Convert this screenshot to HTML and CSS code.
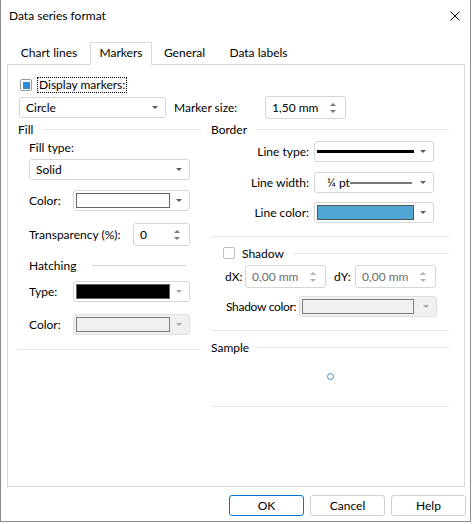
FILE: index.html
```html
<!DOCTYPE html>
<html lang="en">
<head>
    <meta charset="UTF-8">
    <title>Data series format</title>
    <link rel="stylesheet" href="styles.css">
</head>
<body>
    <div class="dialog">
        <!-- Title bar -->
        <div class="titlebar">
            <span class="title">Data series format</span>
            <svg class="close" width="10" height="10" viewBox="0 0 10 10">
                <path d="M0.5 0.5L9.5 9.5M9.5 0.5L0.5 9.5" stroke="#000" stroke-width="1" fill="none"/>
            </svg>
        </div>

        <!-- Tabs -->
        <div class="tabs">
            <div class="tab tab-lines">Chart lines</div>
            <div class="tab tab-markers active">Markers</div>
            <div class="tab tab-general">General</div>
            <div class="tab tab-labels">Data labels</div>
        </div>

        <div class="panel">
            <div class="display-row">
                <span class="checkbox checked"><span class="tick"></span></span>
                <span class="focus-label">Display markers:</span>
            </div>

            <div class="marker-row">
                <div class="combo combo-shape">
                    <span>Circle</span>
                    <span class="arrow"></span>
                </div>
                <span class="marker-size-label">Marker size:</span>
                <div class="spin spin-size">
                    <span>1,50 mm</span>
                    <span class="spin-btns"><i class="up"></i><i class="down"></i></span>
                </div>
            </div>

            <div class="columns">
                <!-- Fill -->
                <div class="col-left">
                    <div class="group-head">
                        <span>Fill</span>
                        <span class="rule"></span>
                    </div>
                    <div class="field-label">Fill type:</div>
                    <div class="combo combo-fill">
                        <span>Solid</span>
                        <span class="arrow"></span>
                    </div>
                    <div class="row row-color">
                        <span class="lbl lbl-short">Color:</span>
                        <div class="combo combo-swatch">
                            <span class="swatch swatch-white"></span>
                            <span class="arrow"></span>
                        </div>
                    </div>
                    <div class="row row-transp">
                        <span class="lbl lbl-transp">Transparency (%):</span>
                        <div class="spin spin-transp">
                            <span>0</span>
                            <span class="spin-btns"><i class="up"></i><i class="down"></i></span>
                        </div>
                    </div>
                    <div class="hatch-head">
                        <span class="hatch-title">Hatching</span>
                        <span class="rule"></span>
                    </div>
                    <div class="row row-type">
                        <span class="lbl lbl-short">Type:</span>
                        <div class="combo combo-swatch">
                            <span class="swatch swatch-black"></span>
                            <span class="arrow arrow-light"></span>
                        </div>
                    </div>
                    <div class="row row-hcolor">
                        <span class="lbl lbl-short">Color:</span>
                        <div class="combo combo-swatch disabled">
                            <span class="swatch swatch-off"></span>
                            <span class="arrow arrow-light"></span>
                        </div>
                    </div>
                    <div class="sep sep-left"></div>
                </div>

                <!-- Border / Shadow / Sample -->
                <div class="col-right">
                    <div class="group-head">
                        <span>Border</span>
                        <span class="rule"></span>
                    </div>
                    <div class="row row-linetype">
                        <span class="lbl lbl-right">Line type:</span>
                        <div class="combo combo-line">
                            <span class="line-solid"></span>
                            <span class="arrow"></span>
                        </div>
                    </div>
                    <div class="row row-linewidth">
                        <span class="lbl lbl-right">Line width:</span>
                        <div class="combo combo-line combo-width">
                            <span class="width-text">¼ pt</span>
                            <span class="line-thin"></span>
                            <span class="arrow"></span>
                        </div>
                    </div>
                    <div class="row row-linecolor">
                        <span class="lbl lbl-right">Line color:</span>
                        <div class="combo combo-line">
                            <span class="swatch swatch-blue"></span>
                            <span class="arrow"></span>
                        </div>
                    </div>
                    <div class="sep sep-right sep-border"></div>

                    <div class="shadow-head">
                        <span class="checkbox"></span>
                        <span class="shadow-title">Shadow</span>
                        <span class="rule"></span>
                    </div>
                    <div class="row row-offsets">
                        <span class="lbl lbl-dx">dX:</span>
                        <div class="spin spin-off">
                            <span>0,00 mm</span>
                            <span class="spin-btns"><i class="up"></i><i class="down"></i></span>
                        </div>
                        <span class="lbl lbl-dy">dY:</span>
                        <div class="spin spin-off">
                            <span>0,00 mm</span>
                            <span class="spin-btns"><i class="up"></i><i class="down"></i></span>
                        </div>
                    </div>
                    <div class="row row-shcolor">
                        <span class="lbl lbl-shcolor">Shadow color:</span>
                        <div class="combo combo-shadow disabled">
                            <span class="swatch swatch-off swatch-wide"></span>
                            <span class="arrow arrow-light"></span>
                        </div>
                    </div>
                    <div class="sep sep-right sep-shadow"></div>

                    <div class="group-head sample-head">
                        <span>Sample</span>
                        <span class="rule"></span>
                    </div>
                    <div class="sample-box">
                        <span class="sample-dot"></span>
                    </div>
                    <div class="sep sep-right"></div>
                </div>
            </div>
        </div>

        <!-- Buttons -->
        <div class="buttons">
            <button class="btn primary">OK</button>
            <button class="btn">Cancel</button>
            <button class="btn">Help</button>
        </div>
    </div>
</body>
</html>
```

FILE: styles.css
```css
* {
    margin: 0;
    padding: 0;
    box-sizing: border-box;
}

body {
    background: #fff;
    font-family: Lato, "Noto Sans", sans-serif;
    font-size: 12px;
    color: #000;
}

.dialog {
    width: 471px;
    height: 522px;
    border: 1px solid #8a8a8a;
    border-top: none;
    display: flex;
    flex-direction: column;
    background: #fff;
}

/* Title bar */
.titlebar {
    height: 31px;
    display: flex;
    align-items: center;
    justify-content: space-between;
    padding: 0 10px 0 8px;
}

/* Tabs */
.tabs {
    display: flex;
    align-items: flex-start;
    height: 22px;
    margin-top: 11px;
    padding-left: 7px;
}

.tab {
    line-height: 21px;
    text-align: center;
}

.tab-lines { width: 82px; }
.tab-markers { width: 62px; }
.tab-general { width: 65px; }
.tab-labels { width: 83px; }

.tab.active {
    height: 23px;
    line-height: 19px;
    border: 1px solid #d9d9d9;
    border-bottom: none;
    background: #fff;
    position: relative;
    z-index: 1;
}

/* Panel */
.panel {
    margin: 0 5px 0 6px;
    height: 423px;
    border: 1px solid #d9d9d9;
    padding: 0 15px 0 10px;
}

.display-row {
    display: flex;
    align-items: center;
    height: 16px;
    margin-top: 12px;
}

.checkbox {
    width: 12px;
    height: 12px;
    border: 1px solid #a8a8a8;
    border-radius: 2px;
    background: #fff;
    display: flex;
    align-items: center;
    justify-content: center;
    flex-shrink: 0;
}

.display-row .checkbox {
    margin-left: 2px;
    border-color: #9a9a9a;
}

.tick {
    width: 7px;
    height: 7px;
    background: #2b8ad4;
}

.focus-label {
    margin-left: 5px;
    height: 16px;
    line-height: 14px;
    padding: 0 1px;
    border: 1px dotted #000;
}

.marker-row {
    display: flex;
    align-items: center;
    height: 23px;
    margin-top: 3px;
}

/* Combo boxes */
.combo {
    display: flex;
    align-items: center;
    height: 21px;
    border: 1px solid #d6d6d6;
    border-radius: 3px;
    background: #fff;
    padding-left: 6px;
}

.combo.disabled {
    background: #f0f0f0;
    border-color: #dedede;
}

.arrow {
    margin-left: auto;
    margin-right: 7px;
    width: 0;
    height: 0;
    border-left: 3px solid transparent;
    border-right: 3px solid transparent;
    border-top: 3px solid #5c5c5c;
}

.arrow-light {
    border-top-color: #a6a6a6;
}

.combo-shape {
    margin-left: 1px;
    width: 147px;
}

.marker-size-label {
    margin-left: 8px;
    width: 91px;
}

/* Spin boxes */
.spin {
    display: flex;
    align-items: center;
    height: 23px;
    border: 1px solid #d6d6d6;
    border-radius: 3px;
    background: #fff;
    padding-left: 6px;
}

.spin-btns {
    margin-left: auto;
    margin-right: 9px;
    display: flex;
    flex-direction: column;
    gap: 4px;
}

.spin-btns i {
    display: block;
    width: 0;
    height: 0;
    border-left: 3px solid transparent;
    border-right: 3px solid transparent;
}

.spin-btns .up { border-bottom: 3px solid #7a7a7a; }
.spin-btns .down { border-top: 3px solid #7a7a7a; }

.spin-size { width: 81px; }

.spin-off {
    width: 81px;
    color: #6d6d6d;
}

.spin-off .spin-btns .up { border-bottom-color: #b0b0b0; }
.spin-off .spin-btns .down { border-top-color: #b0b0b0; }

/* Columns */
.columns {
    display: grid;
    grid-template-columns: 183px 238px;
    column-gap: 10px;
}

.group-head {
    display: flex;
    align-items: center;
    height: 14px;
    margin-top: 3px;
}

.rule {
    flex: 1;
    height: 1px;
    background: #e6e6e6;
    margin-left: 9px;
}

.row {
    display: flex;
    align-items: center;
}

.lbl {
    flex-shrink: 0;
    white-space: nowrap;
}

.sep {
    height: 1px;
    background: #e6e6e6;
}

/* Fill column */
.field-label {
    margin: 4px 0 0 11px;
    line-height: 16px;
}

.combo-fill {
    margin: 3px 0 0 11px;
    width: 161px;
}

.col-left .row {
    padding-left: 11px;
}

.lbl-short { width: 44px; }
.lbl-transp { width: 104px; }

.row-color { margin-top: 10px; }
.row-transp { margin-top: 12px; }
.row-type { margin-top: 9px; }
.row-hcolor { margin-top: 12px; }

.combo-swatch {
    width: 117px;
    padding-left: 2px;
}

.spin-transp { width: 57px; }

.swatch {
    width: 94px;
    height: 15px;
    border: 1px solid #646464;
}

.swatch-white { background: #fff; }
.swatch-black { background: #000; }
.swatch-off {
    background: #f0f0f0;
    border-color: #7c7c7c;
}

.hatch-head {
    display: flex;
    align-items: center;
    height: 14px;
    margin: 12px 15px 0 11px;
}

.hatch-title { width: 63px; }

.hatch-head .rule {
    margin-left: 0;
    background: #d2d2d2;
}

.sep-left { margin-top: 14px; }

/* Border column */
.lbl-right {
    width: 98px;
    text-align: right;
}

.row-linetype { margin-top: 5px; }
.row-linewidth { margin-top: 10px; }
.row-linecolor { margin-top: 9px; }

.combo-line {
    margin-left: 5px;
    width: 120px;
    padding-left: 2px;
}

.line-solid {
    width: 97px;
    height: 3px;
    background: #000;
}

.width-text {
    margin-left: 10px;
}

.line-thin {
    width: 62px;
    height: 2px;
    background: #7a7a7a;
}

.swatch-blue {
    width: 97px;
    background: #4fa6d3;
    border-color: #555;
}

.sep-right { margin-left: 1px; }
.sep-border { margin-top: 13px; }

.shadow-head {
    display: flex;
    align-items: center;
    height: 14px;
    margin-top: 9px;
}

.shadow-head .checkbox {
    margin-left: 12px;
    border-color: #bdbdbd;
}

.shadow-title { margin-left: 7px; }

.row-offsets {
    height: 23px;
    margin-top: 5px;
}

.lbl-dx {
    margin-left: 14px;
    width: 20px;
}

.lbl-dy {
    margin-left: 8px;
    width: 21px;
}

.row-shcolor { margin-top: 8px; }

.lbl-shcolor {
    margin-left: 15px;
    width: 73px;
    letter-spacing: -0.3px;
}

.combo-shadow {
    width: 138px;
    padding-left: 2px;
}

.swatch-wide { width: 112px; }

.sep-shadow { margin-top: 13px; }

.sample-head { margin-top: 9px; }

.sample-box {
    height: 52px;
    display: flex;
    justify-content: center;
    align-items: flex-start;
    padding-top: 19px;
}

.sample-dot {
    width: 7px;
    height: 7px;
    border: 1px solid #3b8fd0;
    border-radius: 50%;
}

/* Buttons */
.buttons {
    display: flex;
    justify-content: flex-end;
    gap: 6px;
    margin-top: 8px;
    padding-right: 4px;
}

.btn {
    width: 75px;
    height: 21px;
    border: 1px solid #d0d0d0;
    border-radius: 3px;
    background: #fff;
    font-family: inherit;
    font-size: 12px;
    color: #000;
}

.btn.primary {
    border-color: #0078d7;
}
```
